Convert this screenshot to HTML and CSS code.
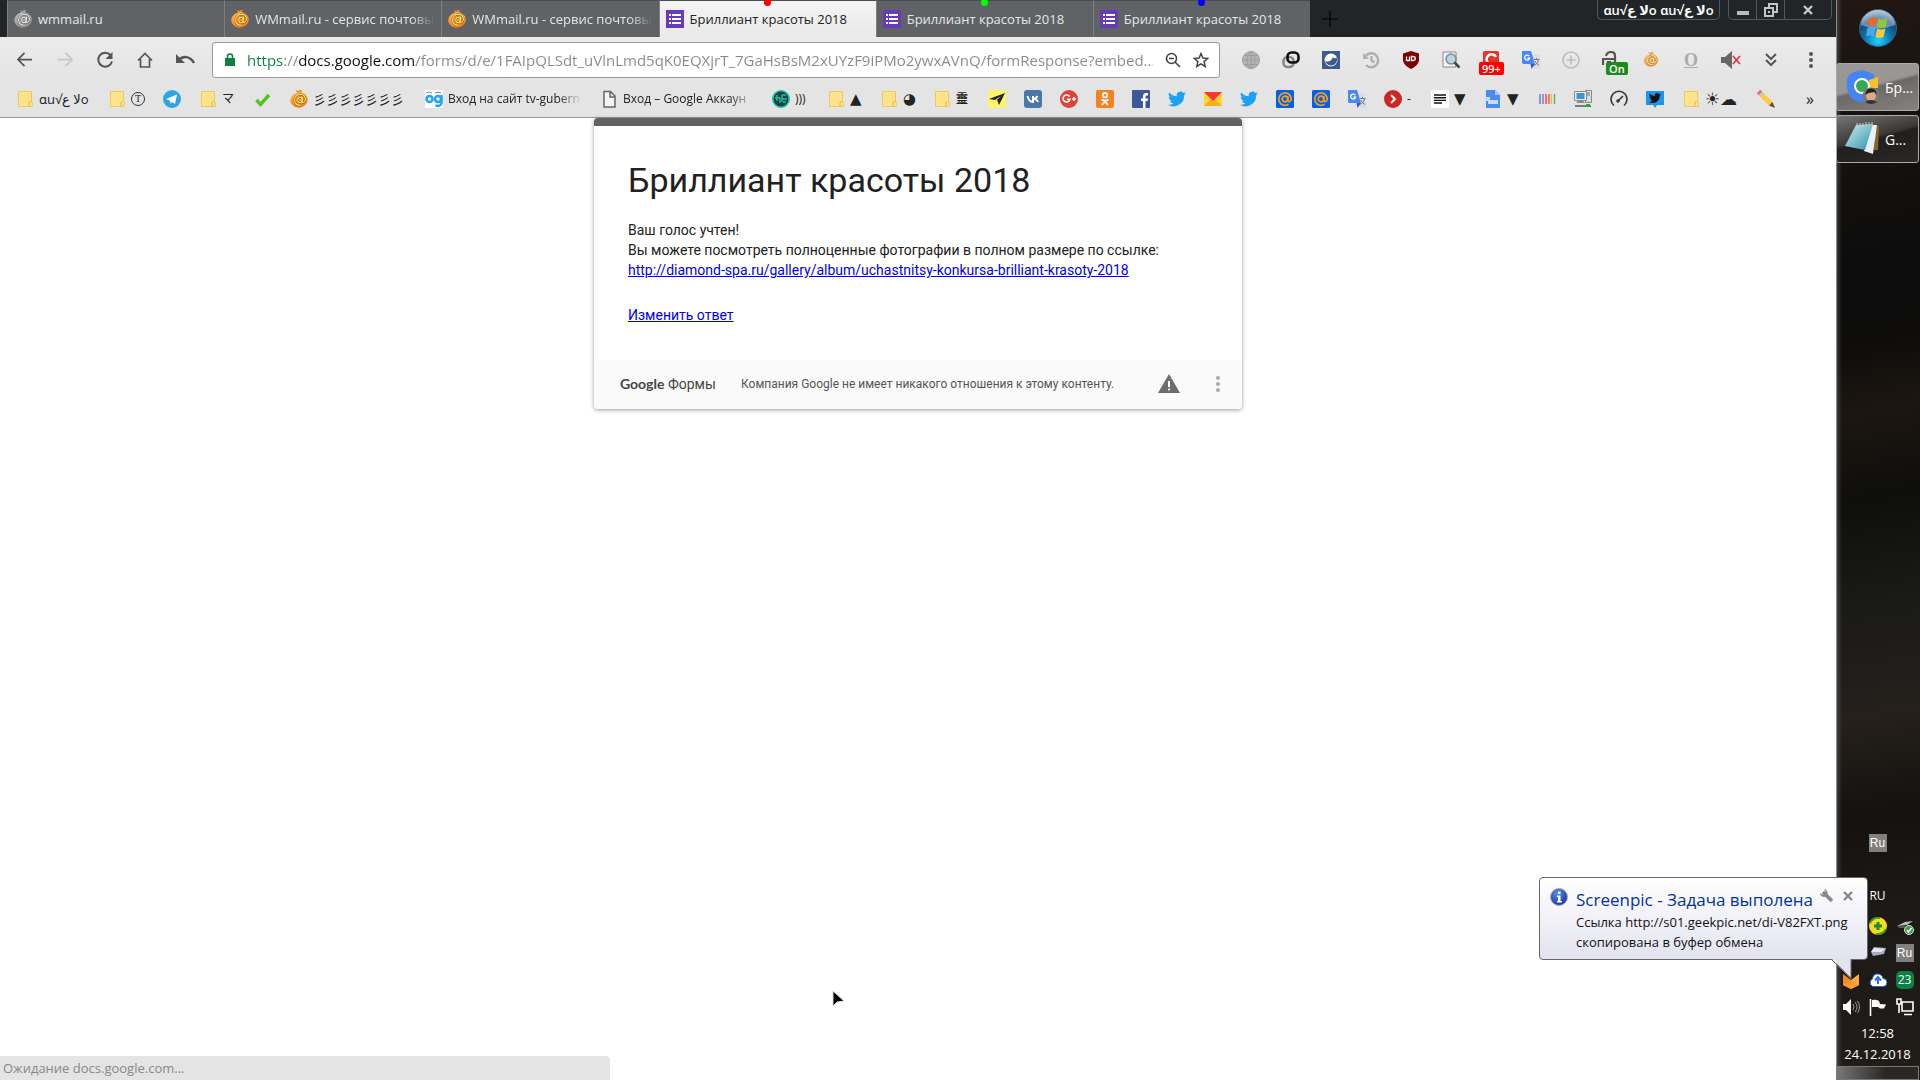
FILE: index.html
```html
<!DOCTYPE html>
<html lang="ru">
<head>
<meta charset="utf-8">
<title>Бриллиант красоты 2018</title>
<link rel="stylesheet" href="styles.css">
</head>
<body>
<svg class="defs" aria-hidden="true">
  <defs>
    <linearGradient id="orange" x1="0" y1="0" x2="0" y2="1"><stop offset="0" stop-color="#ffb75a"/><stop offset="1" stop-color="#f07a1a"/></linearGradient>
    <radialGradient id="orb" cx=".5" cy=".85" r=".9"><stop offset="0" stop-color="#22d4ff"/><stop offset=".35" stop-color="#0c7fc0"/><stop offset=".65" stop-color="#154a7d"/><stop offset="1" stop-color="#b7cfdf"/></radialGradient>
    <linearGradient id="pad" x1="0" y1="0" x2="1" y2="1"><stop offset="0" stop-color="#cfeef3"/><stop offset="1" stop-color="#2f93a8"/></linearGradient>
    <radialGradient id="info" cx=".4" cy=".3" r=".8"><stop offset="0" stop-color="#5d8df0"/><stop offset="1" stop-color="#0a2c9c"/></radialGradient>
    <symbol id="forms" viewBox="0 0 18 18"><path fill="#673ab7" d="M0 0h18v18H0z"/><path fill="#fff" d="M3 4h2v2H3zm3 0h9v2H6zM3 8h2v2H3zm3 0h9v2H6zM3 12h2v2H3zm3 0h9v2H6z"/></symbol>
    <symbol id="wm" viewBox="0 0 18 18"><path d="M6 0l2 1 2-1h2l-1 3H7z" fill="#e98a22"/><ellipse cx="9" cy="10" rx="8.800" ry="7.600" fill="url(#orange)" transform="rotate(-12 9 10)"/><g fill="none" stroke="#8a3c00" stroke-width="2"><ellipse cx="10" cy="10" rx="2.200" ry="2.600"/><path d="M12.600 7l-.6 4.400c0 2 3.400 1 3.400-2.200C15.400 5.500 12.500 4.200 10 4.400c-3.500.2-5.400 3-5.400 5.800 0 3.400 2.900 5.400 6.400 4.900"/></g><g fill="none" stroke="#ffe26b" stroke-width="1.300"><ellipse cx="10" cy="10" rx="2.200" ry="2.600"/><path d="M12.600 7l-.6 4.400c0 2 3.400 1 3.400-2.200C15.400 5.500 12.500 4.200 10 4.400c-3.500.2-5.400 3-5.400 5.800 0 3.400 2.900 5.400 6.400 4.900"/></g></symbol>
    <symbol id="folder" viewBox="0 0 18 18"><path d="M2.500 1.500h13v10.500h.8v4.500H2.500z" fill="#ffe38a" stroke="#eccb5a"/><path d="M13 16.500v-3.500q0-1.500 1.700-1.500" fill="none" stroke="#e0b93c"/></symbol>
    <symbol id="bird" viewBox="0 0 24 24"><path d="M24 4.600c-.9.400-1.800.7-2.800.8 1-.6 1.800-1.600 2.200-2.700-1 .6-2 1-3.100 1.200A4.900 4.900 0 0 0 11.800 8.400C7.700 8.200 4.100 6.200 1.700 3.200a4.900 4.900 0 0 0 1.500 6.600c-.8 0-1.600-.2-2.200-.6a4.900 4.900 0 0 0 3.900 4.900c-.7.200-1.500.2-2.200.1a4.900 4.900 0 0 0 4.600 3.400A9.900 9.900 0 0 1 0 19.500 14 14 0 0 0 21.500 7.100c1-.7 1.800-1.600 2.500-2.500z"/></symbol>
    <symbol id="at" viewBox="0 0 18 18"><rect width="18" height="18" rx="1.500" fill="#005ff9"/><g fill="none" stroke="#ff9e00" stroke-width="1.700"><circle cx="9" cy="9" r="2.800"/><path d="M11.800 6v4.200c0 2.200 3.400 2 3.400-1.200a6.200 6.200 0 1 0-2.600 5.100"/></g></symbol>
    <symbol id="translate" viewBox="0 0 18 18"><path fill="#d9dde0" d="M8 4h10v14h-6z"/><path fill="#4a86f7" d="M0 0h9l4 13H1.500Q0 13 0 11z"/><path fill="#3557c4" d="M8.500 13H13l-3.500 5z"/><path d="M7.300 5.200A2.500 2.500 0 1 0 7.600 7.200H5.400" fill="none" stroke="#fff" stroke-width="1.300"/><path d="M12 8.500h5.500M14.500 7v1.500M16.500 8.500c-.5 3-2 4.500-4 6M13 10c.8 2 2.300 3.500 4.300 4.500" fill="none" stroke="#6d7f86"/></symbol>
  </defs>
</svg>

<div class="browser">
  <header class="tabstrip">
    <div class="tabs" role="tablist">
      <button class="tab gray" role="tab"><svg class="i18"><use href="#wm"/></svg><span>wmmail.ru</span></button>
      <button class="tab" role="tab"><svg class="i18"><use href="#wm"/></svg><span class="fade">WMmail.ru - сервис почтовых</span></button>
      <button class="tab" role="tab"><svg class="i18"><use href="#wm"/></svg><span class="fade">WMmail.ru - сервис почтовых</span></button>
      <button class="tab active" role="tab" aria-selected="true"><i class="dot red"></i><svg class="i18"><use href="#forms"/></svg><span>Бриллиант красоты 2018</span></button>
      <button class="tab" role="tab"><i class="dot green"></i><svg class="i18"><use href="#forms"/></svg><span>Бриллиант красоты 2018</span></button>
      <button class="tab" role="tab"><i class="dot blue"></i><svg class="i18"><use href="#forms"/></svg><span>Бриллиант красоты 2018</span></button>
    </div>
    <button class="newtab" aria-label="Новая вкладка"><svg width="18" height="18"><path d="M9 1v16M1 9h16" stroke="#000" stroke-width="1.200"/></svg></button>
    <div class="winbtns">
      <button class="profile"><bdo dir="ltr">ɑu√ع ﻻo ɑu√ع ﻻo</bdo></button>
      <div class="controls">
        <button aria-label="Свернуть"><svg width="14" height="14"><path d="M1 8h12v4H1z" fill="#bbb"/></svg></button>
        <button aria-label="Восстановить"><svg width="14" height="14" fill="none" stroke="#c4c4c4" stroke-width="2"><path d="M1 5h8v8H1zM5 4V1h8v8h-3"/><path d="M4 9h2" /></svg></button>
        <button class="close" aria-label="Закрыть"><svg width="12" height="12"><path d="M2 2l8 8M10 2l-8 8" stroke="#c8c8c8" stroke-width="2.400"/></svg></button>
      </div>
    </div>
  </header>

  <nav class="toolbar">
    <div class="navbtns">
      <button aria-label="Назад"><svg width="16" height="16" viewBox="1 1 17 17" fill="none" stroke="#555" stroke-width="1.900"><path d="M17 9H3M9 2L2 9l7 7"/></svg></button>
      <button aria-label="Вперёд"><svg width="16" height="16" viewBox="0 1 17 17" fill="none" stroke="#c6c6c6" stroke-width="1.900"><path d="M1 9h14M9 2l7 7-7 7"/></svg></button>
      <button aria-label="Обновить"><svg width="18" height="18" fill="none" stroke="#555" stroke-width="2"><path d="M14.500 4A7 7 0 1 0 16 10.500"/><path d="M16.500 1v7h-7z" fill="#555" stroke="none"/></svg></button>
      <button aria-label="Домой"><svg width="18" height="18" fill="none" stroke="#555" stroke-width="1.700"><path d="M2 9.500L9 2.500l7 7M4.500 8v8h9V8"/></svg></button>
      <button aria-label="Отменить"><svg width="20" height="18" fill="none" stroke="#555" stroke-width="2.400"><path d="M4 9C8 4.500 15 5 19 12"/><path d="M1 3v9h9z" fill="#555" stroke="none"/></svg></button>
    </div>
    <div class="omnibox">
      <svg width="10" height="14"><path d="M0 5h10v8H0z" fill="#0b8043"/><path d="M2.500 6V3.500a2.500 2.500 0 0 1 5 0V6" fill="none" stroke="#0b8043" stroke-width="1.600"/></svg>
      <input type="text" class="url" aria-label="Адрес" value="https://docs.google.com/forms/d/e/1FAIpQLSdt_uVlnLmd5qK0EQXjrT_7GaHsBsM2xUYzF9iPMo2ywxAVnQ/formResponse?embed...">
      <button aria-label="Масштаб"><svg width="16" height="16" fill="none" stroke="#444" stroke-width="1.600"><circle cx="6.500" cy="6.500" r="5"/><path d="M4 6.500h5M10 10l5 5"/></svg></button>
      <button aria-label="В закладки"><svg width="16" height="16" fill="none" stroke="#444" stroke-width="1.500"><path d="M8 1.500l1.900 4.500 4.900.4-3.700 3.200 1.100 4.900L8 11.900l-4.200 2.600 1.100-4.900L1.200 6.400l4.900-.4z"/></svg></button>
    </div>
    <div class="exts">
      <button aria-label="Глобус"><svg class="i18" viewBox="0 0 18 18" fill="#b4b4b4" stroke="#979797" stroke-width=".7"><circle cx="9" cy="9" r="8.600"/><ellipse cx="9" cy="9" rx="4" ry="8.600"/><path d="M9 .5v17M.5 9h17M2 4.500h14M2 13.500h14"/></svg></button>
      <button aria-label="Связь"><svg class="i18" viewBox="0 0 18 18" fill="none" stroke-width="2.600"><rect x="1.500" y="6" width="10" height="10" rx="4" stroke="#888"/><rect x="5.500" y="1.500" width="11" height="10" rx="4" stroke="#111"/></svg></button>
      <button aria-label="Поток"><svg class="i18" viewBox="0 0 18 18"><path fill="#3c5a8e" d="M0 0h18v18H0z"/><circle cx="9" cy="9" r="6.500" fill="#fff"/><path d="M3 10c4 2 7-1 8-4 1 2 3 1 4 .5A6 6 0 0 1 3 10z" fill="#3c5a8e"/></svg></button>
      <button aria-label="История"><svg class="i18" viewBox="0 0 18 18" fill="none" stroke="#b0b0b0" stroke-width="2.400"><path d="M3 6a7 7 0 1 1 1 8M9.500 5v4.500l3 2"/><path d="M1 2v6h6z" fill="#b0b0b0" stroke="none"/></svg></button>
      <button aria-label="uBlock"><svg class="i18" viewBox="0 0 18 18"><path d="M9 0l8 2.500v7Q16 15 9 18 2 15 1 9.500v-7z" fill="#800000"/><path d="M4.500 5.500v4h3v-4M9.500 5.500v4h1.500c3 0 3-4 0-4z" fill="none" stroke="#fff" stroke-width="1.300"/></svg></button>
      <button aria-label="Поиск по странице"><svg class="i18" viewBox="0 0 18 18"><path d="M1 1h13v15H1z" fill="#f6f6f6" stroke="#888"/><circle cx="9" cy="8" r="5" fill="#b5d6ea" stroke="#888" stroke-width="1.500"/><path d="M12.500 11.500l5 5" stroke="#444" stroke-width="2.500"/></svg></button>
      <button aria-label="Уведомления"><svg class="i18" viewBox="0 0 18 18"><rect x="1" width="16" height="16" rx="2" fill="#e83327"/><path d="M14 6a5 5 0 1 0-1 6" fill="none" stroke="#fff" stroke-width="2.500"/></svg><b class="badge hot">99+</b></button>
      <button aria-label="Переводчик"><svg class="i18"><use href="#translate"/></svg></button>
      <button aria-label="Добавить"><svg class="i18" viewBox="0 0 18 18" fill="none" stroke="#bdbdbd" stroke-width="1.600"><circle cx="9" cy="9" r="8"/><path d="M9 4.500v9M4.500 9h9"/></svg></button>
      <button aria-label="Защита"><svg class="i18" viewBox="0 0 18 18" fill="none" stroke="#555" stroke-width="2.200"><path d="M4 5q1-4 5-4 4 0 4 4v4"/><path d="M1 14V8h12v6M5 11h3v6"/></svg><b class="badge on">On</b></button>
      <button aria-label="WMmail" class="pale"><svg class="i18" viewBox="0 0 18 18"><use href="#wm" x="1" y="1" width="16" height="15"/></svg></button>
      <button class="serif-o" aria-label="Орфо">O</button>
      <button aria-label="Звук"><svg width="20" height="18"><path d="M0 6h4l7-6v18l-7-6H0z" fill="#666"/><path d="M12 5l7 8M19 5l-7 8" stroke="#e53030" stroke-width="1.600"/></svg></button>
      <button aria-label="Ещё"><svg class="i18" viewBox="0 0 18 18" fill="none" stroke="#555" stroke-width="2"><path d="M4 3l5 5 5-5M4 9l5 5 5-5"/></svg></button>
      <button aria-label="Меню"><svg width="4" height="16" fill="#555"><circle cx="2" cy="2" r="2"/><circle cx="2" cy="8" r="2"/><circle cx="2" cy="14" r="2"/></svg></button>
    </div>
  </nav>

  <nav class="bookmarks" aria-label="Закладки">
    <a href="#"><svg class="i18"><use href="#folder"/></svg><bdo dir="ltr" class="w51">ɑu√ع ﻻo</bdo></a>
    <a href="#"><svg class="i18"><use href="#folder"/></svg><span class="w14 circled">T</span></a>
    <a href="#" aria-label="Telegram"><svg class="i18" viewBox="0 0 18 18"><circle cx="9" cy="9" r="9" fill="#2ca5e0"/><path d="M3 9l11-4.500-2 9.500-3-2-1.500 1.700-.5-3z" fill="#fff"/></svg></a>
    <a href="#"><svg class="i18"><use href="#folder"/></svg><span class="w14">マ</span></a>
    <a href="#" aria-label="Готово"><svg class="i18" viewBox="0 0 18 18"><path d="M2.500 10l4 4.500L15 5" fill="none" stroke="#55c51c" stroke-width="3.400"/></svg></a>
    <a href="#"><svg class="i18"><use href="#wm"/></svg><span class="w94">彡彡彡彡彡彡彡</span></a>
    <a href="#"><svg class="i18" viewBox="0 0 18 18"><path fill="#fff" d="M0 0h18v18H0z"/><g fill="none" stroke="#20a4ee" stroke-width="2.500"><circle cx="4.500" cy="9" r="3"/><circle cx="13" cy="9" r="3"/><path d="M16.500 5v8q-1 4-6 2.500"/></g><path d="M1 3q3-2 6 0M10 3q3-2 6 0" fill="none" stroke="#888"/></svg><span class="w134 fade">Вход на сайт tv-gubern</span></a>
    <a href="#"><svg class="i18" viewBox="0 0 18 18"><path d="M4 1.500h6.500L15 6v11H4zM10 2v5h5" fill="#f4f4f4" stroke="#666" stroke-width="1.500"/></svg><span class="w131 fade">Вход – Google Аккаун</span></a>
    <a href="#"><svg class="i18" viewBox="0 0 18 18"><circle cx="9" cy="9" r="8.200" fill="#263c4a" stroke="#16c79a" stroke-width="1.600"/><path d="M3 8h5v5M5 5v6M10 5h4M10 9h5M11 12h3M10 5v7" fill="none" stroke="#16c79a" stroke-width="1.300"/></svg><span class="w14">)))</span></a>
    <a href="#"><svg class="i18"><use href="#folder"/></svg><span class="w12 glyph">▲</span></a>
    <a href="#"><svg class="i18"><use href="#folder"/></svg><span class="w12 glyph">◕</span></a>
    <a href="#"><svg class="i18"><use href="#folder"/></svg><span class="w14 bold">靈</span></a>
    <a href="#" aria-label="Почта"><svg class="i18" viewBox="0 0 18 18"><path fill="#fff36b" d="M0 0h18v18H0z"/><path d="M1 9l16-6-6 12-2-5 4-4-6 4z" fill="#222"/></svg></a>
    <a href="#" aria-label="ВКонтакте"><svg class="i18" viewBox="0 0 18 18"><rect width="18" height="18" rx="3" fill="#4a76a8"/><path d="M3.500 6q1.500 6 5.500 6V6M9 9q3 0 4.500-3M10 9q3 0 4 3" fill="none" stroke="#fff" stroke-width="2"/></svg></a>
    <a href="#" aria-label="Google Plus"><svg class="i18" viewBox="0 0 18 18"><circle cx="9" cy="9" r="9" fill="#db4437"/><path d="M9.500 6.500A3.500 3.500 0 1 0 10 9.300H7M12 9h4M14 7v4" fill="none" stroke="#fff" stroke-width="1.600"/></svg></a>
    <a href="#" aria-label="Одноклассники"><svg class="i18" viewBox="0 0 18 18"><rect width="18" height="18" rx="2" fill="#f58220"/><g fill="none" stroke="#fff" stroke-width="1.900"><circle cx="9" cy="5.200" r="2.200"/><path d="M5.500 9.500q3.500 2.500 7 0M9 11.500L6 15M9 11.500l3 3.500"/></g></svg></a>
    <a href="#" aria-label="Facebook"><svg class="i18" viewBox="0 0 18 18"><rect width="18" height="18" rx="1" fill="#3b5998"/><path d="M11 18v-7H9V8.500h2V6.500Q11 3 14 3h2v2.500h-1.500Q13.500 5.500 13.500 7v1.500H16L15.600 11h-2.100v7z" fill="#fff"/></svg></a>
    <a href="#" aria-label="Twitter"><svg class="i18 tw"><use href="#bird"/></svg></a>
    <a href="#" aria-label="Яндекс Почта"><svg class="i18" viewBox="0 0 18 18"><path d="M0 3h18v13H0z" fill="#ffd43a"/><path d="M0 16l7-7h4l7 7z" fill="#f5ae1c"/><path d="M0 2h18l-9 9z" fill="#f33"/></svg></a>
    <a href="#" aria-label="Twitter"><svg class="i18 tw"><use href="#bird"/></svg></a>
    <a href="#" aria-label="Mail.ru"><svg class="i18"><use href="#at"/></svg></a>
    <a href="#" aria-label="Mail.ru"><svg class="i18"><use href="#at"/></svg></a>
    <a href="#" aria-label="Переводчик"><svg class="i18"><use href="#translate"/></svg></a>
    <a href="#"><svg class="i18" viewBox="0 0 18 18"><circle cx="9" cy="9" r="9" fill="#d02323"/><path d="M7 5l4 4-4 4" fill="none" stroke="#fff" stroke-width="2"/></svg><span class="w6">-</span></a>
    <a href="#"><svg class="i18" viewBox="0 0 18 18"><rect width="18" height="18" rx="1.500" fill="#fff"/><path d="M3 5h12M3 7.700h12M3 10.400h12M3 13h8" stroke="#111" stroke-width="1.400"/></svg><span class="w12 glyph">▼</span></a>
    <a href="#"><svg class="i18" viewBox="0 0 18 18"><path d="M2 0h9l5 5v13H2z" fill="#4a8cf0"/><path d="M11 0l5 5h-5z" fill="#a9c8fb"/><path d="M1 7h5v3h8v4H4v-3H1z" fill="#c6dafa"/></svg><span class="w13 glyph">▼</span></a>
    <a href="#" aria-label="Полосы"><svg class="i18" viewBox="0 0 18 18" stroke-width="1.300"><path d="M2 4v10" stroke="#3a7bd5"/><path d="M5 4v10" stroke="#8e5ac8"/><path d="M8 4v10" stroke="#e33"/><path d="M11 4v10" stroke="#e54a2a"/><path d="M13.500 4v10" stroke="#f5b83c"/><path d="M16.500 4v10" stroke="#46b946"/></svg></a>
    <a href="#" aria-label="Компьютер"><svg class="i18" viewBox="0 0 18 18"><path d="M11.500.5h6v12h-6z" fill="#ddd" stroke="#888"/><path d="M13 3h3M13 5h3" stroke="#777"/><path d="M.5 1.500h12v9H.5z" fill="#eee" stroke="#888"/><path d="M2.500 3h8v6h-8z" fill="#3b93dd"/><path d="M4 11h5l2 2H2z" fill="#888"/><path d="M1 16h16" stroke="#555" stroke-width="1.500"/><path d="M12 14h4v3h-4z" fill="#1cae3c"/></svg></a>
    <a href="#" aria-label="Скорость"><svg class="i18" viewBox="0 0 18 18" fill="none" stroke="#333" stroke-width="1.600"><path d="M4 15.500a8 8 0 1 1 10 0M8 11l5-5"/><circle cx="8" cy="11" r="1"/></svg></a>
    <a href="#" aria-label="Twitter"><svg class="i18" viewBox="0 0 18 18"><path d="M0 1h18v14h-7l-2 3-2-3H0z" fill="#1b95f0"/><use href="#bird" x="3" y="2" width="12" height="12" fill="#111"/></svg></a>
    <a href="#"><svg class="i18"><use href="#folder"/></svg><span class="w34">☀☁</span></a>
    <a href="#" aria-label="Карандаш"><svg class="i18" viewBox="0 0 18 18"><path d="M3 3l11 11" stroke="#ffc83d" stroke-width="5"/><path d="M1.500 1.500l2 2" stroke="#f0637a" stroke-width="5"/><path d="M3.500 3.500l1.500 1.500" stroke="#bcd" stroke-width="5"/><path d="M12 15.500l3.500-3.500L18 18z" fill="#6a4a34"/></svg></a>
    <button class="more" aria-label="Другие закладки">»</button>
  </nav>

  <main class="page">
    <section class="card">
      <div class="content">
        <h1>Бриллиант красоты 2018</h1>
        <p>Ваш голос учтен!<br>Вы можете посмотреть полноценные фотографии в полном размере по ссылке:<br><a href="#">http://diamond-spa.ru/gallery/album/uchastnitsy-konkursa-brilliant-krasoty-2018</a></p>
        <p class="edit"><a href="#">Изменить ответ</a></p>
      </div>
      <footer class="cardfoot">
        <span class="logo"><b>Google</b> Формы</span>
        <span class="note">Компания Google не имеет никакого отношения к этому контенту.</span>
        <button class="warn" aria-label="Сообщить о нарушении"><svg width="22" height="19"><path d="M11 0l11 19H0z" fill="#6e6e6e"/><path d="M10 7h2v6h-2zm0 7.500h2v2h-2z" fill="#fff"/></svg></button>
        <button class="dots" aria-label="Ещё"><svg width="4" height="16" fill="#aaa"><circle cx="2" cy="2" r="2"/><circle cx="2" cy="8" r="2"/><circle cx="2" cy="14" r="2"/></svg></button>
      </footer>
    </section>
  </main>
  <div class="status">Ожидание docs.google.com...</div>
</div>

<aside class="taskbar">
  <button class="start" aria-label="Пуск"><svg width="40" height="40" viewBox="0 0 40 40"><circle cx="20" cy="20" r="18.500" fill="url(#orb)" stroke="#3a5c74"/><path d="M3 17a17 15 0 0 1 34 0q-17 7-34 0z" fill="#fff" opacity=".35"/><path d="M11 11q4-3 8-1l-1.500 8.500q-4-2-8 0z" fill="#f0642a"/><path d="M20.500 10.500q4 2 9-.5L27.500 19q-4 2-8.500 0z" fill="#8ec63f"/><path d="M9.500 20q4-2 8 0L16 28.500q-4-2-8 0z" fill="#4fa7e6"/><path d="M19 20.500q4 2 8.500 0l-2 8.500q-4 2-8 0z" fill="#fdc834"/></svg></button>
  <button class="task current"><svg width="36" height="36" viewBox="0 0 36 36"><path d="M4 6Q16-3 29 6l2 22Q20 34 15 33 5 31 3 23 0 12 4 6z" fill="#4285f4"/><path d="M24 11l9-3v11h-8z" fill="#fbc02d"/><circle cx="17" cy="17" r="7" fill="#34a853" stroke="#fff" stroke-width="2"/><circle cx="26" cy="27" r="8.500" fill="#77787a"/><circle cx="26" cy="27" r="5" fill="#d9a98c"/><path d="M20.500 26q0-7 6-6.500 5 0 5 6.500l-2-3-6 1z" fill="#2a211d"/><path d="M20 33q6-4 12 0-6 4-12 0z" fill="#333"/></svg><span>Бр...</span></button>
  <button class="task"><svg width="36" height="36" viewBox="0 0 36 36"><path d="M30 5h4l-1 24h-4z" fill="#8a642c"/><path d="M24 4h8l-4 29-9-3z" fill="#e7f0f2"/><path d="M11 4l17-1-8 26-20-4z" fill="url(#pad)"/><path d="M12 2v4M15 2v4M18 2v4M21 1v4M24 1v4M27 1v4" stroke="#ccc"/></svg><span>G...</span></button>
  <div class="spacer"></div>
  <span class="ru">Ru</span>
  <span class="lang">RU</span>
  <div class="tray">
    <i></i>
    <svg class="i18" viewBox="0 0 18 18"><circle cx="9" cy="9" r="9" fill="#f8d91d"/><path d="M1 6Q4 0 11 1M17 12q-3 6-10 5" stroke="#2f9e32" stroke-width="2" fill="none"/><path d="M9 5v8M5 9h8" stroke="#1b8f2a" stroke-width="3"/></svg>
    <svg class="i18" viewBox="0 0 18 18"><path d="M1 9l8-4 8-1-6 4z" fill="#bbb"/><path d="M1 9h8v2H3z" fill="#555"/><circle cx="13" cy="13" r="4.500" fill="#36a543" stroke="#ddd"/><path d="M11 13l1.500 2 3-4" fill="none" stroke="#fff" stroke-width="1.500"/></svg>
    <svg class="i18" viewBox="0 0 18 18"><path d="M9 3l8 5-8 9-8-9z" fill="#f7941d"/></svg>
    <svg class="i18" viewBox="0 0 18 18"><path d="M2 8l3-5 12 1-2 6-11 2z" fill="#a9a8c6"/><path d="M2 8l3-4 11 1-4 3z" fill="#e6e5f4"/></svg>
    <span class="ru">Ru</span>
    <svg class="i18" viewBox="0 0 18 18"><path d="M1 3l8 6v9l-8-4z" fill="#f58a1c"/><path d="M17 3L9 9v9l8-4z" fill="#ffab45"/><path d="M1 14l8-5 8 5-8 4z" fill="#ff9a2e"/></svg>
    <svg class="i18" viewBox="0 0 18 18"><path d="M4 15.500a4 4 0 0 1-.5-7.500Q4 3 8.500 3 13 3 14 7.500a4 4 0 0 1 0 8z" fill="#fff" stroke="#2862c4"/><path d="M9 13V8M6 9.500L9 6l3 3.500" fill="none" stroke="#2b6fe8" stroke-width="2"/></svg>
    <span class="num">23</span>
    <svg class="i18" viewBox="0 0 18 18"><path d="M1 6h3l5-5v16l-5-5H1z" fill="#fff"/><path d="M11 6q2 3 0 6M13 4q4 5 0 10M15.500 3q4 6 0 12" fill="none" stroke="#999"/></svg>
    <svg class="i18" viewBox="0 0 18 18"><path d="M1.500 1v17" stroke="#fff" stroke-width="1.600"/><path d="M3 2q4-1 7 1l1 3 6 .5-2 4H11L9 9H3z" fill="#fff"/></svg>
    <svg class="i18" viewBox="0 0 18 18"><path d="M6 4h11v9H6z" fill="#222" stroke="#fff" stroke-width="1.600"/><path d="M1 1h4v5H1zM3 6v9M8 16.500h8" fill="none" stroke="#fff" stroke-width="1.600"/></svg>
  </div>
  <time class="clock">12:58<br>24.12.2018</time>
  <button class="showdesk" aria-label="Показать рабочий стол"></button>
</aside>

<div class="balloon" role="status">
  <svg class="i18" viewBox="0 0 18 18"><circle cx="9" cy="9" r="8.500" fill="url(#info)" stroke="#aab"/><path d="M8 3.500h2.500V6H8zM7 7.500h3.500V13H12v1.500H7V13h1V9H7z" fill="#fff"/></svg>
  <div class="btext">
    <strong>Screenpic - Задача выполена</strong>
    <p>Ссылка http://s01.geekpic.net/di-V82FXT.png<br>скопирована в буфер обмена</p>
  </div>
  <div class="bbtns">
    <button aria-label="Настройка"><svg width="14" height="14"><path d="M3 3l9 9" stroke="#888" stroke-width="3.500"/><path d="M4 0l2 3-3 3-3-2q0 4 5 4 4-3 2-6-1-2-3-2z" fill="#888"/></svg></button>
    <button aria-label="Закрыть"><svg width="12" height="12"><path d="M2 2l8 8M10 2l-8 8" stroke="#888" stroke-width="2.400"/></svg></button>
  </div>
  <svg class="tail" width="22" height="22"><path d="M0 0l20 20V0" fill="#e3e3f0"/><path d="M0 1l20 20V1" fill="none" stroke="#666"/></svg>
</div>

<svg class="cursor" width="14" height="18"><path d="M1 1v15l4-4 7-1z" fill="#000" stroke="#d5dbe2" stroke-width="1"/></svg>
</body>
</html>
```

FILE: styles.css
```css
* { box-sizing: border-box; }

body {
  margin: 0;
  min-height: 100vh;
  display: flex;
  background: #fff;
  font-family: "Open Sans", "Noto Sans", "DejaVu Sans", "Noto Sans CJK JP", sans-serif;
  font-size: 12px;
  color: #222;
}

button {
  border: 0;
  padding: 0;
  background: none;
  font: inherit;
  color: inherit;
}

svg { display: block; flex: none; }
.defs { position: absolute; width: 0; height: 0; }
.i18 { width: 18px; height: 18px; }

.browser {
  flex: 1;
  min-width: 0;
  display: flex;
  flex-direction: column;
}

/* tab strip */
.tabstrip {
  display: flex;
  height: 37px;
  padding-left: 7px;
  background: #212527;
}
.tabs { display: flex; flex: 0 1 1303px; min-width: 0; }
.tab {
  position: relative;
  flex: 1 1 0;
  min-width: 0;
  display: flex;
  align-items: center;
  gap: 6px;
  padding: 0 6px;
  background: #606366;
  border-top: 1px solid #4a4d50;
  border-left: 1px solid #7d8083;
  color: #e6e6e6;
  font-size: 13px;
  white-space: nowrap;
}
.tab span { overflow: hidden; }
.tab.active { background: linear-gradient(#f4f4f4, #e9e9e9); color: #222; }
.gray svg { filter: grayscale(1); }
.fade {
  mask-image: linear-gradient(to left, transparent, #000 24px);
}
.dot {
  position: absolute;
  top: -2px;
  left: 104px;
  width: 7px;
  height: 7px;
  border-radius: 50%;
}
.red { background: #f00; }
.green { background: #0f0; }
.blue { background: #00f; }
.newtab { width: 40px; display: grid; place-items: center; }
.winbtns {
  margin-left: auto;
  display: flex;
  align-items: flex-start;
  gap: 8px;
  padding-right: 4px;
}
.profile, .controls {
  height: 20px;
  border: 1px solid #54585b;
  border-top: 0;
  border-radius: 0 0 5px 5px;
}
.profile {
  width: 123px;
  color: #fff;
  font-weight: 600;
  font-size: 13px;
  line-height: 18px;
  white-space: nowrap;
}
.controls { display: flex; width: 104px; }
.controls button { flex: 1; display: grid; place-items: center; }
.controls .close { flex: 0 0 47px; }
.controls button + button { border-left: 1px solid #54585b; }

/* address row */
.toolbar {
  display: flex;
  align-items: center;
  height: 45px;
  padding: 1px 5px 0;
  background: linear-gradient(#ebebeb, #e4e4e4);
}
.navbtns, .exts { display: flex; }
.navbtns button, .exts button {
  position: relative;
  width: 40px;
  height: 36px;
  display: grid;
  place-items: center;
}
.omnibox {
  flex: 1;
  min-width: 0;
  display: flex;
  align-items: center;
  gap: 12px;
  height: 36px;
  margin: 0 11px 0 7px;
  padding: 0 10px 0 12px;
  background: #fff;
  border: 1px solid #999;
  border-radius: 3px;
}
.url {
  flex: 1;
  min-width: 0;
  padding: 0;
  border: 0;
  outline: 0;
  font: inherit;
  font-size: 15px;
  background: linear-gradient(to right, #0b8043 37px, #888 37px, #888 52px, #111 52px, #111 169px, #888 169px);
  background-clip: text;
  color: transparent;
}
.badge {
  position: absolute;
  left: 8px;
  bottom: 3px;
  padding: 0 3px;
  border-radius: 2px;
  color: #fff;
  font-size: 11px;
  font-weight: 600;
  line-height: 13px;
}
.hot { background: #f00; }
.on { background: #1d8a1d; left: 15px; }
.pale { opacity: .75; }
.exts .serif-o {
  color: #aaa;
  font: bold 18px "Liberation Serif", serif;
  text-decoration: underline;
}

/* bookmarks */
.bookmarks {
  display: flex;
  align-items: center;
  height: 36px;
  padding: 0 22px 2px 7px;
  background: #e4e4e4;
  border-bottom: 1px solid #999;
  overflow: hidden;
}
.bookmarks a {
  flex: none;
  display: flex;
  align-items: center;
  gap: 5px;
  padding: 0 9px;
  color: #222;
  text-decoration: none;
  white-space: nowrap;
}
.bookmarks span, .bookmarks bdo { overflow: hidden; line-height: 18px; }
.w6 { width: 6px; }
.w12 { width: 12px; }
.w13 { width: 13px; }
.w14 { width: 14px; }
.w34 { width: 34px; font-size: 17px; }
.w51 { width: 51px; font-size: 13px; }
.w94 { width: 94px; font-size: 13px; }
.w131 { width: 131px; }
.w134 { width: 134px; }
.bold { font-weight: 700; }
.bookmarks .glyph { overflow: visible; font: 15px/18px "DejaVu Sans", sans-serif; }
.bookmarks .circled {
  height: 14px;
  border: 1px solid #333;
  border-radius: 50%;
  font: 10px/12px "Liberation Serif", serif;
  text-align: center;
}
.tw { fill: #1da1f2; }
.more { margin-left: auto; font-size: 16px; }

/* page */
.page { flex: 1; padding: 0 16px; }
.card {
  max-width: 648px;
  margin: 0 auto;
  border-top: 8px solid #636160;
  border-radius: 4px;
  overflow: hidden;
  box-shadow: 0 1px 4px rgba(0, 0, 0, .4);
  font-family: Roboto, sans-serif;
  color: #212121;
}
.content { padding: 32px 34px 35px; font-size: 14px; line-height: 20px; }
h1 { margin: 0 0 18px; font-size: 34px; font-weight: 400; line-height: 44px; }
p { margin: 0; }
.edit { padding-top: 25px; }
.content a { color: #00e; }
.cardfoot {
  display: flex;
  align-items: center;
  height: 49px;
  padding: 0 22px 2px 26px;
  background: #fafafa;
  color: #555;
  font-size: 12px;
}
.logo { flex: none; width: 121px; font-size: 14px; color: #444; }
.logo b { font-family: Lato, sans-serif; }
.warn { margin-left: auto; margin-right: 36px; }

.status {
  align-self: flex-start;
  width: 610px;
  max-width: 100%;
  height: 24px;
  padding: 0 3px;
  background: #e4e4e4;
  border-radius: 0 4px 0 0;
  color: #888;
  font-size: 13px;
  line-height: 25px;
}

/* taskbar */
.taskbar {
  flex: 0 0 84px;
  display: flex;
  flex-direction: column;
  align-items: center;
  padding-right: 1px;
  background:
    linear-gradient(to right, #8b8b8b 1px, rgba(130, 130, 130, .35) 1px, transparent 6px),
    linear-gradient(170deg, #211713 0%, #151210 14%, #0c0c0c 25%, #0e0d0c 32%, #1c1610 38%, #0e0e0d 46%, #1a1a19 56%, #25201c 66%, #14110e 75%, #1c1917 84%, #211d19 100%);
  color: #fff;
}
.start { margin: 8px 0 15px; }
.task {
  display: flex;
  align-items: center;
  align-self: stretch;
  gap: 4px;
  height: 48px;
  margin-bottom: 4px;
  padding-left: 8px;
  border: 1px solid #aaa;
  border-radius: 3px;
  background: linear-gradient(165deg, #777 0%, #3a3735 45%, #211f1e 50%, #2b2827 100%);
  font-size: 14px;
}
.current { background: linear-gradient(165deg, #999 0%, #999593 45%, #6c6967 50%, #858280 100%); }
.spacer { flex: 1; }
.ru {
  width: 18px;
  height: 18px;
  background: #808080;
  font: 12px/18px "Liberation Sans", sans-serif;
  text-align: center;
}
.lang { margin: 35px 0 13px; line-height: 17px; }
.tray {
  display: grid;
  grid-template-columns: repeat(3, 18px);
  gap: 9px;
  padding-bottom: 7px;
}
.num {
  background: #0b8043;
  border-radius: 5px;
  text-align: center;
  line-height: 18px;
}
.clock { font-size: 13px; line-height: 21px; text-align: center; }
.showdesk {
  align-self: stretch;
  height: 14px;
  margin-top: 1px;
  border: 1px solid #777;
  background: linear-gradient(to right, #777, #2a2725 60%);
}

/* tray notification */
.balloon {
  position: absolute;
  right: 52px;
  bottom: 120px;
  width: 329px;
  height: 83px;
  display: flex;
  gap: 8px;
  padding: 10px;
  border: 1px solid #666;
  border-radius: 4px;
  background: linear-gradient(#fff, #e3e3f0);
}
.btext { flex: 1; min-width: 0; white-space: nowrap; color: #111; }
.btext strong {
  display: block;
  color: #039;
  font-size: 17px;
  font-weight: 400;
  line-height: 24px;
}
.btext p { font-size: 13px; line-height: 20px; }
.bbtns { position: absolute; top: 11px; right: 13px; display: flex; gap: 8px; }
.tail { position: absolute; right: 14px; top: 80px; }
.cursor { position: absolute; left: 832px; top: 990px; }
```
